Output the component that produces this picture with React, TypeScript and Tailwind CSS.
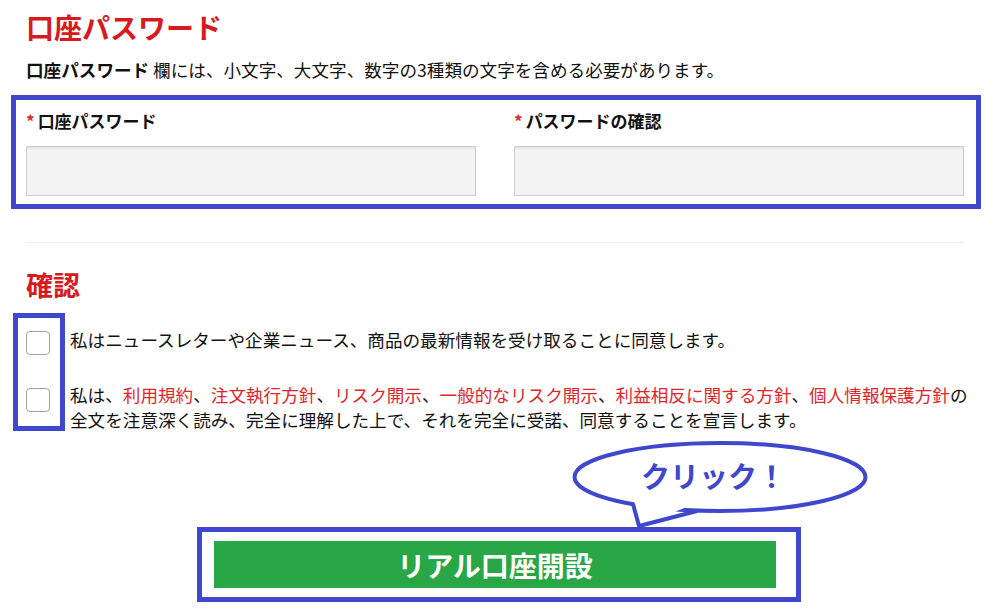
import React from 'react';

const font = { fontFamily: '"Noto Sans CJK JP", "Noto Sans", sans-serif' };

function Checkbox() {
    return <span className="block h-[24px] w-[24px] shrink-0 rounded-[4px] border-[1.5px] border-[#a3a3a3] bg-white" />;
}

function Field({ label }: { label: string }) {
    return (
        <div className="flex flex-col">
            <div className="flex h-[24px] items-center text-[17px] font-bold leading-[24px] text-[#111]">
                <span className="mr-[3px] text-[#e0262d]">*</span>
                {label}
            </div>
            <div className="mt-[13px] h-[50px] w-[450px] border border-[#cfcfcf] bg-[#f4f4f4] shadow-[inset_0_2px_2px_rgba(0,0,0,0.06)]" />
        </div>
    );
}

function Bubble() {
    return (
        <div className="absolute left-[368px] top-[-95px] h-[92px] w-[302px]">
            <svg width="302" height="92" viewBox="0 0 302 92" className="absolute inset-0">
                <ellipse cx="150" cy="40" rx="145.5" ry="34" fill="#fff" stroke="#3f48cc" strokeWidth="4" />
                <polygon points="63,58 69,89 127,66" fill="#fff" />
                <polyline points="63,67 69,89 127,74" fill="none" stroke="#3f48cc" strokeWidth="4" strokeLinejoin="round" />
            </svg>
            <span className="absolute left-[71px] top-[18px] whitespace-nowrap text-[29px] font-bold leading-[40px] text-[#3f48cc]">
                クリック！
            </span>
        </div>
    );
}

export default function App() {
    return (
        <div className="min-h-[613px] w-[1006px] bg-white" style={font}>
            <div className="ml-[26px] w-[938px] pt-[9px]">
                {/* パスワード */}
                <h2 className="text-[28px] font-bold leading-[36px] text-[#d71920]">口座パスワード</h2>
                <p className="mt-[12px] text-[17.6px] leading-[26px] text-[#111]">
                    <span className="font-bold">口座パスワード</span> 欄には、小文字、大文字、数字の3種類の文字を含める必要があります。
                </p>

                <div className="-ml-[15px] -mr-[17px] mt-[12px] border-[5px] border-[#3f48cc] pb-[8px] pl-[10px] pr-[12px] pt-[9px]">
                    <div className="flex justify-between">
                        <Field label="口座パスワード" />
                        <Field label="パスワードの確認" />
                    </div>
                </div>

                <div className="mt-[33px] h-px bg-[#ececec]" />

                {/* 確認 */}
                <h2 className="mt-[25px] text-[27px] font-bold leading-[34px] text-[#d71920]">確認</h2>

                <div className="relative mt-[28px] text-[17.6px] leading-[25px] text-[#111]">
                    <div className="absolute left-[-13px] top-[-17px] h-[118px] w-[52px] border-[5px] border-[#3f48cc]" />
                    <div className="flex items-start gap-[20px]">
                        <div className="mt-[1px]">
                            <Checkbox />
                        </div>
                        <p className="-mt-[3px]">私はニュースレターや企業ニュース、商品の最新情報を受け取ることに同意します。</p>
                    </div>
                    <div className="mt-[29px] flex items-start gap-[20px]">
                        <div className="mt-[4px]">
                            <Checkbox />
                        </div>
                        <p className="-mt-[2px] whitespace-nowrap">
                            私は、<span className="text-[#e0262d]">利用規約</span>、
                            <span className="text-[#e0262d]">注文執行方針</span>、
                            <span className="text-[#e0262d]">リスク開示</span>、
                            <span className="text-[#e0262d]">一般的なリスク開示</span>、
                            <span className="text-[#e0262d]">利益相反に関する方針</span>、
                            <span className="text-[#e0262d]">個人情報保護方針</span>の
                            <br />
                            全文を注意深く読み、完全に理解した上で、それを完全に受諾、同意することを宣言します。
                        </p>
                    </div>
                </div>

                {/* ボタン */}
                <div className="relative ml-[171px] mt-[95px] w-[604px] border-[5px] border-[#3f48cc] py-[9px] pl-[12px] pr-[20px]">
                    <Bubble />
                    <button className="flex h-[47px] w-full items-center justify-center bg-[#29a645] text-[28px] font-bold text-white">
                        リアル口座開設
                    </button>
                </div>
            </div>
        </div>
    );
}
